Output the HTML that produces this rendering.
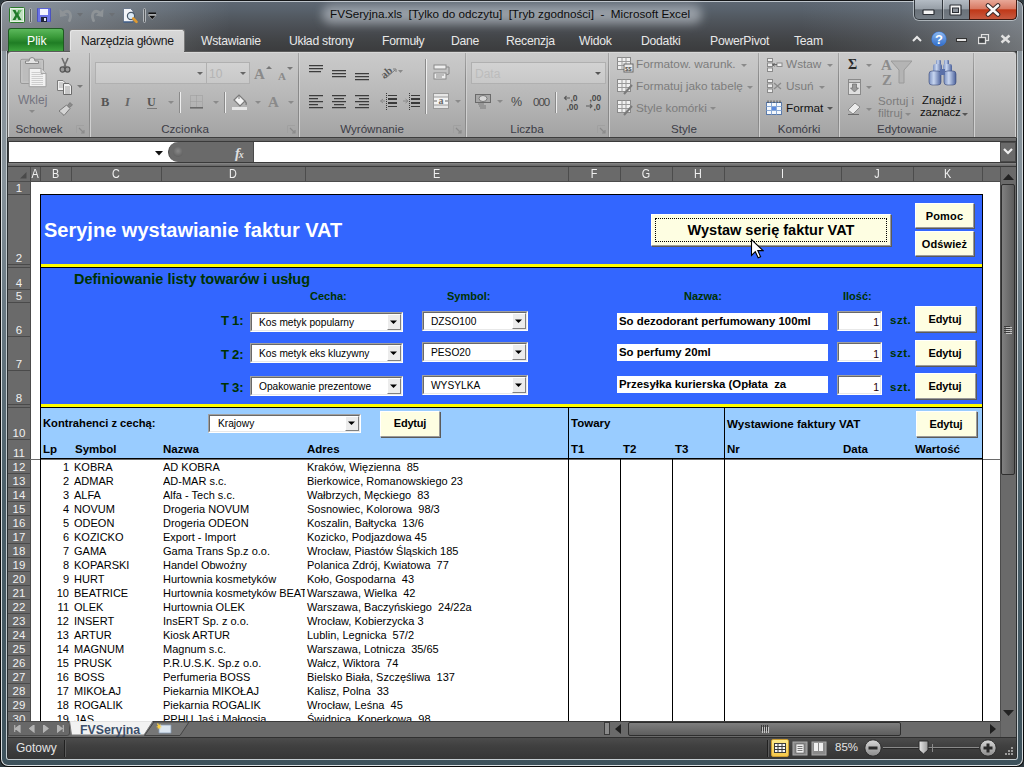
<!DOCTYPE html><html><head><meta charset="utf-8"><style>
html,body{margin:0;padding:0;}
body{width:1024px;height:767px;overflow:hidden;position:relative;background:#2f3a40;font-family:"Liberation Sans",sans-serif;}
.r{position:absolute;box-sizing:border-box;}
.t{position:absolute;white-space:nowrap;}
</style></head><body>

<div class="r" style="left:0px;top:0px;width:1024px;height:52px;background:linear-gradient(#5e6874 0,#58616b 10px,#50565d 20px,#474a4f 32px,#404244 42px,#3b3c3e 51px);border-radius:7px 7px 0 0;overflow:hidden;"></div>
<div class="r" style="left:0px;top:0px;width:1024px;height:52px;background:linear-gradient(90deg,rgba(200,208,215,0.45) 0,rgba(190,198,205,0.3) 100px,rgba(190,198,205,0.15) 170px,rgba(0,0,0,0) 230px,rgba(0,0,0,0) 800px,rgba(160,170,180,0.15) 900px,rgba(200,208,215,0.38) 1024px);border-radius:7px 7px 0 0;"></div>
<div class="r" style="left:0px;top:0px;width:1024px;height:52px;border:1px solid #141618;border-bottom:none;border-radius:7px 7px 0 0;box-shadow:inset 1px 1px 0 rgba(230,235,240,0.7), inset -1px 0 0 rgba(230,235,240,0.6);"></div>
<div class="r" style="left:0px;top:51px;width:1024px;height:716px;background:#0a0a0a;border-radius:0 0 8px 8px;"></div>
<div class="r" style="left:1px;top:51px;width:1022px;height:715px;background:#d8dde0;border-radius:0 0 7px 7px;"></div>
<div class="r" style="left:2px;top:51px;width:1020px;height:714px;background:linear-gradient(#8c969e 0,#86929a 130px,#6a7a84 250px,#4a5e68 450px,#3e525c 716px);border-radius:0 0 6px 6px;"></div>
<div class="r" style="left:6px;top:51px;width:1012px;height:709px;background:#c4ccd0;border-radius:0 0 3px 3px;"></div>
<div class="r" style="left:7px;top:51px;width:1010px;height:708px;background:#2a2e30;border-radius:0 0 2px 2px;"></div>
<svg class="r" style="left:9px;top:7px;" width="17" height="16" viewBox="0 0 17 16"><rect x="0.5" y="0.5" width="15" height="15" rx="1" fill="#e8f4e8" stroke="#2a7a2a"/><rect x="2" y="2" width="12" height="12" fill="#bfe0bf"/><path d="M3.5 3 L6.5 3 L8 6 L9.5 3 L12.5 3 L9.6 8 L12.5 13 L9.5 13 L8 10 L6.5 13 L3.5 13 L6.4 8 Z" fill="#1f7a28"/><path d="M9.5 3 L12.5 3 L9.6 8 Z" fill="#6cc06c"/></svg>
<div class="r" style="left:29px;top:8px;width:3px;height:15px;border:1px solid #b4b8bc;border-radius:2px;background:#5a5e62;"></div>
<svg class="r" style="left:37px;top:8px;" width="14" height="14" viewBox="0 0 14 14"><rect x="0" y="0" width="14" height="14" rx="1" fill="#4a52c0"/><rect x="1" y="0.5" width="12" height="13" fill="#6c74e6"/><rect x="3" y="1" width="8" height="6" fill="#f4f4ff"/><rect x="4" y="9" width="6" height="5" fill="#20243a"/><rect x="7" y="10" width="2" height="3" fill="#e0e0f0"/></svg>
<svg class="r" style="left:59px;top:7px;" width="14" height="15" viewBox="0 0 14 15"><path d="M3.5 6.5 Q7 3 10 5 Q13 8 10.5 13.5" fill="none" stroke="#8e9397" stroke-width="2.8" stroke-linecap="round"/><path d="M0.5 2 L1 10 L8.5 8.5 Z" fill="#8e9397"/></svg>
<svg class="r" style="left:77px;top:13px;" width="7" height="4" viewBox="0 0 7 4"><path d="M0 0 L6 0 L3 3.5 Z" fill="#6c7075"/></svg>
<svg class="r" style="left:90px;top:7px;" width="14" height="15" viewBox="0 0 14 15"><path d="M10.5 6.5 Q7 3 4 5 Q1 8 3.5 13.5" fill="none" stroke="#8e9397" stroke-width="2.8" stroke-linecap="round"/><path d="M13.5 2 L13 10 L5.5 8.5 Z" fill="#8e9397"/></svg>
<svg class="r" style="left:109px;top:13px;" width="7" height="4" viewBox="0 0 7 4"><path d="M0 0 L6 0 L3 3.5 Z" fill="#6c7075"/></svg>
<svg class="r" style="left:122px;top:7px;" width="16" height="17" viewBox="0 0 16 17"><path d="M1.5 1.5 L8.5 1.5 L11 4 L11 15 L1.5 15 Z" fill="#f4f6fa" stroke="#5a6a80" stroke-width="0.8"/><path d="M1.5 15 H11" stroke="#3a5a8a" stroke-width="1.2"/><circle cx="9" cy="9" r="3.6" fill="#dceaf6" stroke="#4a5a6a" stroke-width="1.2"/><path d="M11.3 11.5 L14.5 14.8" stroke="#e09a30" stroke-width="2.6" stroke-linecap="round"/></svg>
<div class="r" style="left:143px;top:8px;width:3px;height:15px;border:1px solid #b4b8bc;border-radius:2px;background:#5a5e62;"></div>
<svg class="r" style="left:148px;top:12px;" width="9" height="9" viewBox="0 0 9 9"><rect x="0.5" y="0.5" width="7.5" height="1.6" fill="#111"/><rect x="0.5" y="2.1" width="7.5" height="0.6" fill="#ddd"/><path d="M0.5 3.5 L8 3.5 L4.25 7.5 Z" fill="#111" stroke="#ddd" stroke-width="0.5"/></svg>
<div class="r" style="left:322px;top:5px;width:380px;height:19px;background:rgba(205,212,218,0.55);border-radius:10px;filter:blur(5px);"></div>
<div class="t" style="left:330px;top:8.10px;font-size:11.7px;line-height:11.7px;color:#0c0c0c;">FVSeryjna.xls&nbsp; [Tylko do odczytu]&nbsp; [Tryb zgodności]&nbsp; -&nbsp; Microsoft Excel</div>
<div class="r" style="left:913px;top:0px;width:105px;height:21px;border-radius:0 0 6px 6px;background:rgba(230,236,240,0.55);"></div>
<div class="r" style="left:914px;top:0px;width:103px;height:20px;border:1px solid #30363c;border-top:none;border-radius:0 0 5px 5px;overflow:hidden;background:linear-gradient(#b4bcc4 0,#98a0a8 45%,#6a727a 52%,#747c84 100%);"></div>
<div class="r" style="left:942px;top:0px;width:1px;height:19px;background:#30363c;box-shadow:1px 0 0 rgba(255,255,255,0.35);"></div>
<div class="r" style="left:969px;top:0px;width:48px;height:20px;border:1px solid #401810;border-top:none;border-radius:0 0 5px 0;background:linear-gradient(#e8a898 0,#d87a64 45%,#c03818 52%,#c85a40 100%);"></div>
<svg class="r" style="left:922px;top:9px;" width="14" height="7" viewBox="0 0 14 7"><rect x="1" y="1" width="11" height="4.5" rx="0.5" fill="#f4f4f4" stroke="#2a2e34" stroke-width="1.2"/></svg>
<svg class="r" style="left:949px;top:4px;" width="13" height="12" viewBox="0 0 13 12"><rect x="1" y="1" width="11" height="10" rx="0.5" fill="#f4f4f4" stroke="#2a2e34" stroke-width="1.2"/><rect x="3.5" y="4" width="6" height="4.5" fill="#8a9098" stroke="#2a2e34" stroke-width="1"/></svg>
<svg class="r" style="left:985px;top:3px;" width="16" height="14" viewBox="0 0 16 14"><path d="M3 2.5 L13 11.5 M13 2.5 L3 11.5" stroke="#3a2a2a" stroke-width="4.6" stroke-linecap="round"/><path d="M3 2.5 L13 11.5 M13 2.5 L3 11.5" stroke="#fafafa" stroke-width="2.6" stroke-linecap="round"/></svg>
<div class="r" style="left:8px;top:28px;width:56px;height:24px;background:linear-gradient(#5cb85c 0,#3a9a3a 35%,#1f7d24 60%,#40a840 100%);border:1px solid #1f5a22;border-bottom:none;border-radius:3px 3px 0 0;"></div>
<div class="t" style="left:27px;top:34.67px;font-size:12.2px;line-height:12.2px;color:#fff;">Plik</div>
<div class="r" style="left:69px;top:29px;width:116px;height:23px;background:linear-gradient(#d8d8d8,#cdcdcd);border:1px solid #7a7a7a;border-bottom:none;border-radius:3px 3px 0 0;box-shadow:inset 1px 1px 0 #e6e6e6;"></div>
<div class="t" style="left:81px;top:34.67px;font-size:12.2px;line-height:12.2px;color:#1a1a1a;letter-spacing:-0.25px;">Narzędzia główne</div>
<div class="t" style="left:201px;top:34.67px;font-size:12.2px;line-height:12.2px;color:#e8e8e8;letter-spacing:-0.25px;">Wstawianie</div>
<div class="t" style="left:289px;top:34.67px;font-size:12.2px;line-height:12.2px;color:#e8e8e8;letter-spacing:-0.25px;">Układ strony</div>
<div class="t" style="left:382px;top:34.67px;font-size:12.2px;line-height:12.2px;color:#e8e8e8;letter-spacing:-0.25px;">Formuły</div>
<div class="t" style="left:451px;top:34.67px;font-size:12.2px;line-height:12.2px;color:#e8e8e8;letter-spacing:-0.25px;">Dane</div>
<div class="t" style="left:506px;top:34.67px;font-size:12.2px;line-height:12.2px;color:#e8e8e8;letter-spacing:-0.25px;">Recenzja</div>
<div class="t" style="left:579px;top:34.67px;font-size:12.2px;line-height:12.2px;color:#e8e8e8;letter-spacing:-0.25px;">Widok</div>
<div class="t" style="left:641px;top:34.67px;font-size:12.2px;line-height:12.2px;color:#e8e8e8;letter-spacing:-0.25px;">Dodatki</div>
<div class="t" style="left:710px;top:34.67px;font-size:12.2px;line-height:12.2px;color:#e8e8e8;letter-spacing:-0.25px;">PowerPivot</div>
<div class="t" style="left:794px;top:34.67px;font-size:12.2px;line-height:12.2px;color:#e8e8e8;letter-spacing:-0.25px;">Team</div>
<svg class="r" style="left:912px;top:35px;" width="10" height="7" viewBox="0 0 10 7"><path d="M1 6 L5 2 L9 6" fill="none" stroke="#e8e8e8" stroke-width="2"/></svg>
<svg class="r" style="left:931px;top:31px;" width="16" height="16" viewBox="0 0 16 16"><circle cx="8" cy="8" r="7.6" fill="#3b78d8"/><circle cx="8" cy="8" r="7" fill="url(#hg)"/><defs><linearGradient id="hg" x1="0" y1="0" x2="0" y2="1"><stop offset="0" stop-color="#8cb8f0"/><stop offset="1" stop-color="#2f6cc8"/></linearGradient></defs><text x="8" y="12.5" font-family="Liberation Sans" font-weight="bold" font-size="13" fill="#fff" text-anchor="middle">?</text></svg>
<div class="r" style="left:956px;top:38px;width:11px;height:4px;background:#e4e4e4;border:1px solid #333;"></div>
<svg class="r" style="left:978px;top:34px;" width="12" height="11" viewBox="0 0 12 11"><rect x="3.5" y="0.5" width="7" height="6" fill="none" stroke="#e0e0e0" stroke-width="1.2"/><rect x="0.5" y="3.5" width="7" height="6" fill="#45484b" stroke="#e0e0e0" stroke-width="1.3"/></svg>
<svg class="r" style="left:1000px;top:34px;" width="11" height="10" viewBox="0 0 11 10"><path d="M1.5 1.5 L9.5 8.5 M9.5 1.5 L1.5 8.5" stroke="#e0e0e0" stroke-width="2.4"/></svg>
<div class="r" style="left:7px;top:51px;width:1010px;height:87px;background:linear-gradient(#cbcbcb 0,#c4c4c4 20%,#bababa 45%,#afafaf 72%,#a3a3a3 100%);border:1px solid #5a5a5a;border-bottom:none;border-radius:4px 4px 0 0;box-shadow:inset 1px 1px 0 #d8d8d8,inset -1px 0 0 #d0d0d0;"></div>
<div class="r" style="left:89px;top:53px;width:1px;height:84px;background:linear-gradient(#a8a8a8,#8a8a8a 30%,#888 80%,#929292);box-shadow:1px 0 0 #d0d0d0;"></div>
<div class="r" style="left:298px;top:53px;width:1px;height:84px;background:linear-gradient(#a8a8a8,#8a8a8a 30%,#888 80%,#929292);box-shadow:1px 0 0 #d0d0d0;"></div>
<div class="r" style="left:465px;top:53px;width:1px;height:84px;background:linear-gradient(#a8a8a8,#8a8a8a 30%,#888 80%,#929292);box-shadow:1px 0 0 #d0d0d0;"></div>
<div class="r" style="left:608px;top:53px;width:1px;height:84px;background:linear-gradient(#a8a8a8,#8a8a8a 30%,#888 80%,#929292);box-shadow:1px 0 0 #d0d0d0;"></div>
<div class="r" style="left:758px;top:53px;width:1px;height:84px;background:linear-gradient(#a8a8a8,#8a8a8a 30%,#888 80%,#929292);box-shadow:1px 0 0 #d0d0d0;"></div>
<div class="r" style="left:838px;top:53px;width:1px;height:84px;background:linear-gradient(#a8a8a8,#8a8a8a 30%,#888 80%,#929292);box-shadow:1px 0 0 #d0d0d0;"></div>
<div class="r" style="left:973px;top:53px;width:1px;height:84px;background:linear-gradient(#a8a8a8,#8a8a8a 30%,#888 80%,#929292);box-shadow:1px 0 0 #d0d0d0;"></div>
<div class="r" style="left:70px;top:50px;width:114px;height:3px;background:#cccccc;"></div>
<div class="r" style="left:8px;top:137px;width:1008px;height:5px;background:linear-gradient(#3e3e3e 0,#3e3e3e 1px,#727272 1px,#666 4px,#3a3a3a 4px);"></div>
<div class="r" style="left:8px;top:142px;width:1008px;height:20px;background:#fff;border-left:1px solid #3a3a3a;"></div>
<svg class="r" style="left:155px;top:151px;" width="9" height="5" viewBox="0 0 9 5"><path d="M0 0 L8 0 L4 4.5 Z" fill="#111"/></svg>
<div class="r" style="left:168px;top:142px;width:85px;height:20px;background:#6a6a6a;border-radius:10px 0 0 10px;border-left:1px solid #4a4a4a;"></div>
<div class="r" style="left:173px;top:147px;width:10px;height:10px;border-radius:50%;background:radial-gradient(circle at 50% 40%,#888,#555);"></div>
<div class="t" style="left:235px;top:145.73px;font-size:14.5px;line-height:14.5px;color:#e0e0e0;font-family:'Liberation Serif',serif;font-weight:bold;letter-spacing:-1px;"><i>f</i><i style="font-size:10px;">x</i></div>
<div class="r" style="left:253px;top:142px;width:1px;height:20px;background:#4a4a4a;"></div>
<div class="r" style="left:1000px;top:142px;width:16px;height:20px;background:#6a6a6a;border:1px solid #4a4a4a;"></div>
<svg class="r" style="left:1003px;top:148px;" width="10" height="7" viewBox="0 0 10 7"><path d="M1 1 L5 5 L9 1" fill="none" stroke="#f0f0f0" stroke-width="2.2"/></svg>
<div class="r" style="left:8px;top:162px;width:1008px;height:5px;background:linear-gradient(#3a3a3a 0,#3a3a3a 1px,#8a8a8a 1px,#7a7a7a 2px,#666 4px,#3a3a3a 4px);"></div>
<div class="r" style="left:8px;top:167px;width:992px;height:15px;background:#6a6a6a;border-bottom:1px solid #4c4c4c;"></div>
<div class="r" style="left:30px;top:167px;width:1px;height:15px;background:#4c4c4c;"></div>
<div class="t" style="left:30px;top:167.84px;font-size:12px;line-height:12px;color:#f0f0f0;width:10px;text-align:center;transform:scaleX(0.9);">A</div>
<div class="r" style="left:40px;top:167px;width:1px;height:15px;background:#4c4c4c;"></div>
<div class="t" style="left:40px;top:167.84px;font-size:12px;line-height:12px;color:#f0f0f0;width:31px;text-align:center;transform:scaleX(0.9);">B</div>
<div class="r" style="left:71px;top:167px;width:1px;height:15px;background:#4c4c4c;"></div>
<div class="t" style="left:71px;top:167.84px;font-size:12px;line-height:12px;color:#f0f0f0;width:90px;text-align:center;transform:scaleX(0.9);">C</div>
<div class="r" style="left:161px;top:167px;width:1px;height:15px;background:#4c4c4c;"></div>
<div class="t" style="left:161px;top:167.84px;font-size:12px;line-height:12px;color:#f0f0f0;width:144px;text-align:center;transform:scaleX(0.9);">D</div>
<div class="r" style="left:305px;top:167px;width:1px;height:15px;background:#4c4c4c;"></div>
<div class="t" style="left:305px;top:167.84px;font-size:12px;line-height:12px;color:#f0f0f0;width:263px;text-align:center;transform:scaleX(0.9);">E</div>
<div class="r" style="left:568px;top:167px;width:1px;height:15px;background:#4c4c4c;"></div>
<div class="t" style="left:568px;top:167.84px;font-size:12px;line-height:12px;color:#f0f0f0;width:52px;text-align:center;transform:scaleX(0.9);">F</div>
<div class="r" style="left:620px;top:167px;width:1px;height:15px;background:#4c4c4c;"></div>
<div class="t" style="left:620px;top:167.84px;font-size:12px;line-height:12px;color:#f0f0f0;width:52px;text-align:center;transform:scaleX(0.9);">G</div>
<div class="r" style="left:672px;top:167px;width:1px;height:15px;background:#4c4c4c;"></div>
<div class="t" style="left:672px;top:167.84px;font-size:12px;line-height:12px;color:#f0f0f0;width:52px;text-align:center;transform:scaleX(0.9);">H</div>
<div class="r" style="left:724px;top:167px;width:1px;height:15px;background:#4c4c4c;"></div>
<div class="t" style="left:724px;top:167.84px;font-size:12px;line-height:12px;color:#f0f0f0;width:117px;text-align:center;transform:scaleX(0.9);">I</div>
<div class="r" style="left:841px;top:167px;width:1px;height:15px;background:#4c4c4c;"></div>
<div class="t" style="left:841px;top:167.84px;font-size:12px;line-height:12px;color:#f0f0f0;width:72px;text-align:center;transform:scaleX(0.9);">J</div>
<div class="r" style="left:913px;top:167px;width:1px;height:15px;background:#4c4c4c;"></div>
<div class="t" style="left:913px;top:167.84px;font-size:12px;line-height:12px;color:#f0f0f0;width:69px;text-align:center;transform:scaleX(0.9);">K</div>
<div class="r" style="left:982px;top:167px;width:1px;height:15px;background:#4c4c4c;"></div>
<div class="t" style="left:982px;top:167.84px;font-size:12px;line-height:12px;color:#f0f0f0;width:18px;text-align:center;transform:scaleX(0.9);"></div>
<svg class="r" style="left:20px;top:172px;" width="7" height="7" viewBox="0 0 7 7"><path d="M6.5 0 L6.5 6.5 L0 6.5 Z" fill="#4a4a4a"/></svg>
<div class="r" style="left:8px;top:182px;width:23px;height:539px;background:#6a6a6a;border-right:1px solid #4c4c4c;"></div>
<div class="r" style="left:8px;top:194px;width:22px;height:1px;background:#4a4a4a;"></div>
<div class="t" style="left:8px;top:183.27px;font-size:11.5px;line-height:11.5px;color:#f0f0f0;width:22px;text-align:center;">1</div>
<div class="r" style="left:8px;top:264px;width:22px;height:1px;background:#4a4a4a;"></div>
<div class="t" style="left:8px;top:253.27px;font-size:11.5px;line-height:11.5px;color:#f0f0f0;width:22px;text-align:center;">2</div>
<div class="r" style="left:8px;top:267px;width:22px;height:1px;background:#4a4a4a;"></div>
<div class="r" style="left:8px;top:289px;width:22px;height:1px;background:#4a4a4a;"></div>
<div class="t" style="left:8px;top:278.27px;font-size:11.5px;line-height:11.5px;color:#f0f0f0;width:22px;text-align:center;">4</div>
<div class="r" style="left:8px;top:302px;width:22px;height:1px;background:#4a4a4a;"></div>
<div class="t" style="left:8px;top:291.27px;font-size:11.5px;line-height:11.5px;color:#f0f0f0;width:22px;text-align:center;">5</div>
<div class="r" style="left:8px;top:336px;width:22px;height:1px;background:#4a4a4a;"></div>
<div class="t" style="left:8px;top:325.27px;font-size:11.5px;line-height:11.5px;color:#f0f0f0;width:22px;text-align:center;">6</div>
<div class="r" style="left:8px;top:370px;width:22px;height:1px;background:#4a4a4a;"></div>
<div class="t" style="left:8px;top:359.27px;font-size:11.5px;line-height:11.5px;color:#f0f0f0;width:22px;text-align:center;">7</div>
<div class="r" style="left:8px;top:404px;width:22px;height:1px;background:#4a4a4a;"></div>
<div class="t" style="left:8px;top:393.27px;font-size:11.5px;line-height:11.5px;color:#f0f0f0;width:22px;text-align:center;">8</div>
<div class="r" style="left:8px;top:407px;width:22px;height:1px;background:#4a4a4a;"></div>
<div class="r" style="left:8px;top:439px;width:22px;height:1px;background:#4a4a4a;"></div>
<div class="t" style="left:8px;top:428.27px;font-size:11.5px;line-height:11.5px;color:#f0f0f0;width:22px;text-align:center;">10</div>
<div class="r" style="left:8px;top:459px;width:22px;height:1px;background:#4a4a4a;"></div>
<div class="t" style="left:8px;top:448.27px;font-size:11.5px;line-height:11.5px;color:#f0f0f0;width:22px;text-align:center;">11</div>
<div class="r" style="left:8px;top:473px;width:22px;height:1px;background:#4a4a4a;"></div>
<div class="t" style="left:8px;top:462.27px;font-size:11.5px;line-height:11.5px;color:#f0f0f0;width:22px;text-align:center;">12</div>
<div class="r" style="left:8px;top:487px;width:22px;height:1px;background:#4a4a4a;"></div>
<div class="t" style="left:8px;top:476.27px;font-size:11.5px;line-height:11.5px;color:#f0f0f0;width:22px;text-align:center;">13</div>
<div class="r" style="left:8px;top:501px;width:22px;height:1px;background:#4a4a4a;"></div>
<div class="t" style="left:8px;top:490.27px;font-size:11.5px;line-height:11.5px;color:#f0f0f0;width:22px;text-align:center;">14</div>
<div class="r" style="left:8px;top:515px;width:22px;height:1px;background:#4a4a4a;"></div>
<div class="t" style="left:8px;top:504.27px;font-size:11.5px;line-height:11.5px;color:#f0f0f0;width:22px;text-align:center;">15</div>
<div class="r" style="left:8px;top:529px;width:22px;height:1px;background:#4a4a4a;"></div>
<div class="t" style="left:8px;top:518.27px;font-size:11.5px;line-height:11.5px;color:#f0f0f0;width:22px;text-align:center;">16</div>
<div class="r" style="left:8px;top:543px;width:22px;height:1px;background:#4a4a4a;"></div>
<div class="t" style="left:8px;top:532.27px;font-size:11.5px;line-height:11.5px;color:#f0f0f0;width:22px;text-align:center;">17</div>
<div class="r" style="left:8px;top:557px;width:22px;height:1px;background:#4a4a4a;"></div>
<div class="t" style="left:8px;top:546.27px;font-size:11.5px;line-height:11.5px;color:#f0f0f0;width:22px;text-align:center;">18</div>
<div class="r" style="left:8px;top:571px;width:22px;height:1px;background:#4a4a4a;"></div>
<div class="t" style="left:8px;top:560.27px;font-size:11.5px;line-height:11.5px;color:#f0f0f0;width:22px;text-align:center;">19</div>
<div class="r" style="left:8px;top:585px;width:22px;height:1px;background:#4a4a4a;"></div>
<div class="t" style="left:8px;top:574.27px;font-size:11.5px;line-height:11.5px;color:#f0f0f0;width:22px;text-align:center;">20</div>
<div class="r" style="left:8px;top:599px;width:22px;height:1px;background:#4a4a4a;"></div>
<div class="t" style="left:8px;top:588.27px;font-size:11.5px;line-height:11.5px;color:#f0f0f0;width:22px;text-align:center;">21</div>
<div class="r" style="left:8px;top:613px;width:22px;height:1px;background:#4a4a4a;"></div>
<div class="t" style="left:8px;top:602.27px;font-size:11.5px;line-height:11.5px;color:#f0f0f0;width:22px;text-align:center;">22</div>
<div class="r" style="left:8px;top:627px;width:22px;height:1px;background:#4a4a4a;"></div>
<div class="t" style="left:8px;top:616.27px;font-size:11.5px;line-height:11.5px;color:#f0f0f0;width:22px;text-align:center;">23</div>
<div class="r" style="left:8px;top:641px;width:22px;height:1px;background:#4a4a4a;"></div>
<div class="t" style="left:8px;top:630.27px;font-size:11.5px;line-height:11.5px;color:#f0f0f0;width:22px;text-align:center;">24</div>
<div class="r" style="left:8px;top:655px;width:22px;height:1px;background:#4a4a4a;"></div>
<div class="t" style="left:8px;top:644.27px;font-size:11.5px;line-height:11.5px;color:#f0f0f0;width:22px;text-align:center;">25</div>
<div class="r" style="left:8px;top:669px;width:22px;height:1px;background:#4a4a4a;"></div>
<div class="t" style="left:8px;top:658.27px;font-size:11.5px;line-height:11.5px;color:#f0f0f0;width:22px;text-align:center;">26</div>
<div class="r" style="left:8px;top:683px;width:22px;height:1px;background:#4a4a4a;"></div>
<div class="t" style="left:8px;top:672.27px;font-size:11.5px;line-height:11.5px;color:#f0f0f0;width:22px;text-align:center;">27</div>
<div class="r" style="left:8px;top:697px;width:22px;height:1px;background:#4a4a4a;"></div>
<div class="t" style="left:8px;top:686.27px;font-size:11.5px;line-height:11.5px;color:#f0f0f0;width:22px;text-align:center;">28</div>
<div class="r" style="left:8px;top:711px;width:22px;height:1px;background:#4a4a4a;"></div>
<div class="t" style="left:8px;top:700.27px;font-size:11.5px;line-height:11.5px;color:#f0f0f0;width:22px;text-align:center;">29</div>
<div class="r" style="left:8px;top:725px;width:22px;height:1px;background:#4a4a4a;"></div>
<div class="t" style="left:8px;top:714.27px;font-size:11.5px;line-height:11.5px;color:#f0f0f0;width:22px;text-align:center;">30</div>
<div class="r" style="left:31px;top:182px;width:969px;height:539px;background:#fff;"></div>
<div class="r" style="left:30px;top:459px;width:970px;height:1px;background:#6a6a6a;"></div>
<div class="r" style="left:1000px;top:167px;width:16px;height:554px;background:#6a6a6a;border-left:1px solid #4c4c4c;"></div>
<svg class="r" style="left:1003px;top:174px;" width="11" height="6" viewBox="0 0 11 6"><path d="M0 6 L5.5 0 L11 6 Z" fill="#222"/></svg>
<div class="r" style="left:1001px;top:184px;width:14px;height:291px;background:linear-gradient(90deg,#808080,#5c5c5c);border:1px solid #2e2e2e;border-radius:2px;"></div>
<svg class="r" style="left:1003px;top:325px;" width="10" height="10" viewBox="0 0 10 10"><path d="M1 1.5 H7 M1 3.5 H7 M1 5.5 H7 M1 7.5 H7" stroke="#3a3a3a" stroke-width="1"/><path d="M3 2.5 H9 M3 4.5 H9 M3 6.5 H9 M3 8.5 H9" stroke="#c4c4c4" stroke-width="1"/></svg>
<svg class="r" style="left:1003px;top:710px;" width="11" height="6" viewBox="0 0 11 6"><path d="M0 0 L5.5 6 L11 0 Z" fill="#222"/></svg>
<div class="r" style="left:8px;top:721px;width:1008px;height:16px;background:#6a6a6a;border-top:1px solid #3a3a3a;"></div>
<div class="r" style="left:8px;top:721px;width:62px;height:15px;border:1px solid #4a4a4a;border-radius:0 3px 3px 0;background:#686868;"></div>
<svg class="r" style="left:14px;top:725px;" width="8" height="8" viewBox="0 0 8 8"><path d="M0.7 0 V7 M6 0 L1.5 3.5 L6 7 Z" fill="#b4b4b4" stroke="#b4b4b4" stroke-width="1.2"/></svg>
<svg class="r" style="left:29px;top:725px;" width="8" height="8" viewBox="0 0 8 8"><path d="M5 0 L0.5 3.5 L5 7 Z" fill="#b4b4b4" stroke="#b4b4b4" stroke-width="1.2"/></svg>
<svg class="r" style="left:43px;top:725px;" width="8" height="8" viewBox="0 0 8 8"><path d="M0.5 0 L5 3.5 L0.5 7 Z" fill="#b4b4b4" stroke="#b4b4b4" stroke-width="1.2"/></svg>
<svg class="r" style="left:57px;top:725px;" width="8" height="8" viewBox="0 0 8 8"><path d="M0.5 0 L5 3.5 L0.5 7 Z M6.3 0 V7" fill="#b4b4b4" stroke="#b4b4b4" stroke-width="1.2"/></svg>
<svg class="r" style="left:69px;top:721px;" width="84" height="16" viewBox="0 0 84 16"><path d="M0.5 0 L2.5 14 L75 14 L84 0 Z" fill="#f2f2f2" stroke="#7a7a7a" stroke-width="1"/><path d="M1 0 H83" stroke="#f2f2f2" stroke-width="1.5"/></svg>
<div class="t" style="left:80px;top:723.59px;font-size:12.3px;line-height:12.3px;color:#3c4e6a;font-weight:bold;">FVSeryjna</div>
<svg class="r" style="left:144px;top:721px;" width="46" height="16" viewBox="0 0 46 16"><path d="M0.5 14.5 L10 1 L45 1 L36 14.5 Z" fill="#767676" stroke="#444" stroke-width="1"/><path d="M15 4 H27 V12 H15 Z" fill="#dce6f0" stroke="#8aa0b8" stroke-width="0.8"/><path d="M14 2 L15 4 L17 3 L16 5 L18 6 L16 6.5 L16.5 8.5 L15 7 L13.5 8.5 L14 6.5 L12 6 L14 5 L13 3 Z" fill="#ffd040"/></svg>
<div class="r" style="left:604px;top:722px;width:6px;height:13px;background:#8a8a8a;border:1px solid #3a3a3a;"></div>
<svg class="r" style="left:614px;top:724px;" width="8" height="10" viewBox="0 0 8 10"><path d="M7 0 L1 5 L7 10 Z" fill="#1e1e1e"/></svg>
<div class="r" style="left:628px;top:722px;width:273px;height:14px;background:linear-gradient(#7e7e7e,#5e5e5e);border:1px solid #2e2e2e;border-radius:2px;"></div>
<svg class="r" style="left:760px;top:724px;" width="10" height="10" viewBox="0 0 10 10"><path d="M1.5 1 V7 M3.5 1 V7 M5.5 1 V7 M7.5 1 V7" stroke="#3a3a3a" stroke-width="1"/><path d="M2.5 3 V9 M4.5 3 V9 M6.5 3 V9 M8.5 3 V9" stroke="#c4c4c4" stroke-width="1"/></svg>
<svg class="r" style="left:989px;top:724px;" width="8" height="10" viewBox="0 0 8 10"><path d="M1 0 L7 5 L1 10 Z" fill="#1e1e1e"/></svg>
<div class="r" style="left:1000px;top:721px;width:16px;height:16px;background:#6a6a6a;border-left:1px solid #5a5a5a;"></div>
<div class="r" style="left:8px;top:737px;width:1008px;height:22px;background:linear-gradient(#303030 0,#303030 1px,#4c4c4c 1px,#404040 40%,#353535 100%);"></div>
<div class="t" style="left:16px;top:741.84px;font-size:12px;line-height:12px;color:#e4e4e4;">Gotowy</div>
<div class="r" style="left:64px;top:740px;width:1px;height:17px;background:#202020;box-shadow:1px 0 0 #5a5a5a;"></div>
<div class="r" style="left:767px;top:740px;width:1px;height:17px;background:#202020;box-shadow:1px 0 0 #5a5a5a;"></div>
<div class="r" style="left:771px;top:739px;width:18px;height:18px;background:linear-gradient(#fde98a,#f6c84a);border:1px solid #c89a30;border-radius:2px;"></div>
<svg class="r" style="left:774px;top:743px;" width="12" height="10" viewBox="0 0 12 10"><rect x="0.5" y="0.5" width="11" height="9" fill="#f8f8f8" stroke="#3a3a3a"/><path d="M0 3.5 H12 M0 6.5 H12 M4 0 V10 M8 0 V10" stroke="#3a3a3a" stroke-width="1"/></svg>
<svg class="r" style="left:792px;top:741px;" width="16" height="15" viewBox="0 0 16 15"><rect x="1" y="1" width="14" height="13" fill="#8a8a8a" stroke="#aaa"/><rect x="4" y="3" width="8" height="9" fill="#f0f0f0" stroke="#555" stroke-width="0.6"/><path d="M5.5 5.5 H10.5 M5.5 7.5 H10.5 M5.5 9.5 H10.5" stroke="#555" stroke-width="0.8"/></svg>
<svg class="r" style="left:811px;top:741px;" width="16" height="15" viewBox="0 0 16 15"><rect x="1" y="1" width="14" height="13" fill="#8a8a8a" stroke="#aaa"/><rect x="3" y="2" width="4" height="8" fill="#f0f0f0"/><rect x="8" y="2" width="4" height="8" fill="#f0f0f0"/></svg>
<div class="t" style="left:835px;top:742.27px;font-size:11.5px;line-height:11.5px;color:#e4e4e4;">85%</div>
<svg class="r" style="left:864px;top:739px;" width="18" height="18" viewBox="0 0 18 18"><circle cx="9" cy="9" r="8.2" fill="url(#zg)" stroke="#2a2a2a"/><defs><linearGradient id="zg" x1="0" y1="0" x2="0" y2="1"><stop offset="0" stop-color="#d8d8d8"/><stop offset="1" stop-color="#8a8a8a"/></linearGradient></defs><rect x="4.5" y="7.5" width="9" height="3" fill="#2a2a2a"/></svg>
<div class="r" style="left:883px;top:747px;width:96px;height:1px;background:#8a8a8a;box-shadow:0 1px 0 #2a2a2a;"></div>
<svg class="r" style="left:918px;top:740px;" width="11" height="15" viewBox="0 0 11 15"><path d="M1 1 H10 V10 L5.5 14 L1 10 Z" fill="url(#tg)" stroke="#2a2a2a"/><defs><linearGradient id="tg" x1="0" y1="0" x2="1" y2="0"><stop offset="0" stop-color="#e8e8e8"/><stop offset="1" stop-color="#9a9a9a"/></linearGradient></defs></svg>
<div class="r" style="left:932px;top:744px;width:1px;height:8px;background:#8a8a8a;"></div>
<svg class="r" style="left:979px;top:739px;" width="18" height="18" viewBox="0 0 18 18"><circle cx="9" cy="9" r="8.2" fill="url(#zg)" stroke="#2a2a2a"/><rect x="4.5" y="7.5" width="9" height="3" fill="#2a2a2a"/><rect x="7.5" y="4.5" width="3" height="9" fill="#2a2a2a"/></svg>
<svg class="r" style="left:1002px;top:746px;" width="12" height="12" viewBox="0 0 12 12"><g fill="#9a9a9a"><rect x="9" y="1" width="2" height="2"/><rect x="6" y="4" width="2" height="2"/><rect x="9" y="4" width="2" height="2"/><rect x="3" y="7" width="2" height="2"/><rect x="6" y="7" width="2" height="2"/><rect x="9" y="7" width="2" height="2"/></g></svg>
<div class="r" style="left:40px;top:194px;width:943px;height:214px;background:#3366ff;border:1px solid #000;"></div>
<div class="r" style="left:40px;top:264px;width:943px;height:4px;background:#ffff00;border-bottom:1px solid #000;border-left:1px solid #000;border-right:1px solid #000;"></div>
<div class="r" style="left:40px;top:404px;width:943px;height:4px;background:#ffff00;border-bottom:1px solid #000;border-left:1px solid #000;border-right:1px solid #000;"></div>
<div class="r" style="left:40px;top:408px;width:943px;height:51px;background:#99ccff;border:1px solid #000;border-top:none;border-bottom:1px solid #000;"></div>
<div class="r" style="left:40px;top:458px;width:1px;height:263px;background:#000;"></div>
<div class="r" style="left:568px;top:458px;width:1px;height:263px;background:#000;"></div>
<div class="r" style="left:620px;top:458px;width:1px;height:263px;background:#000;"></div>
<div class="r" style="left:672px;top:458px;width:1px;height:263px;background:#000;"></div>
<div class="r" style="left:724px;top:458px;width:1px;height:263px;background:#000;"></div>
<div class="r" style="left:982px;top:458px;width:1px;height:263px;background:#000;"></div>
<div class="r" style="left:568px;top:407px;width:1px;height:52px;background:#000;"></div>
<div class="r" style="left:724px;top:407px;width:1px;height:52px;background:#000;"></div>
<div class="t" style="left:44px;top:220.07px;font-size:20px;line-height:20px;color:#fff;font-weight:bold;">Seryjne wystawianie faktur VAT</div>
<div class="r" style="left:651px;top:214px;width:240px;height:32px;background:#fefee2;border:1px solid;border-color:#fff #9a9a9a #9a9a9a #fff;box-shadow:1px 1px 0 #5a5a5a;"></div>
<div class="r" style="left:655px;top:218px;width:232px;height:24px;border:1px dotted #000;"></div>
<div class="t" style="left:651px;top:223.03px;font-size:14.5px;line-height:14.5px;color:#000;font-weight:bold;width:240px;text-align:center;">Wystaw serię faktur VAT</div>
<div class="r" style="left:915px;top:203px;width:59px;height:25px;background:#fefee2;border:1px solid;border-color:#fff #9a9a9a #9a9a9a #fff;box-shadow:1px 1px 0 #5a5a5a;"></div>
<div class="t" style="left:915px;top:211.19px;font-size:11px;line-height:11px;color:#000;font-weight:bold;width:59px;text-align:center;letter-spacing:0.2px;">Pomoc</div>
<div class="r" style="left:915px;top:231px;width:59px;height:25px;background:#fefee2;border:1px solid;border-color:#fff #9a9a9a #9a9a9a #fff;box-shadow:1px 1px 0 #5a5a5a;"></div>
<div class="t" style="left:915px;top:238.69px;font-size:11px;line-height:11px;color:#000;font-weight:bold;width:59px;text-align:center;letter-spacing:0.1px;">Odśwież</div>
<svg class="r" style="left:750px;top:238px;" width="14" height="22" viewBox="0 0 14 22"><path d="M1.5 1.5 L1.5 17.5 L5.3 13.7 L8.2 19.8 L10.6 18.8 L7.8 12.6 L13 12.6 Z" fill="#fff" stroke="#000" stroke-width="1.1" stroke-linejoin="miter"/></svg>
<div class="t" style="left:74px;top:272.23px;font-size:14.5px;line-height:14.5px;color:#003300;font-weight:bold;">Definiowanie listy towarów i usług</div>
<div class="t" style="left:310px;top:290.69px;font-size:11px;line-height:11px;color:#003300;font-weight:bold;">Cecha:</div>
<div class="t" style="left:447px;top:290.69px;font-size:11px;line-height:11px;color:#003300;font-weight:bold;">Symbol:</div>
<div class="t" style="left:684px;top:290.69px;font-size:11px;line-height:11px;color:#003300;font-weight:bold;">Nazwa:</div>
<div class="t" style="left:843px;top:290.69px;font-size:11px;line-height:11px;color:#003300;font-weight:bold;">Ilość:</div>
<div class="t" style="left:221px;top:313.83px;font-size:13.2px;line-height:13.2px;color:#003300;font-weight:bold;letter-spacing:-0.3px;">T 1:</div>
<div class="r" style="left:250px;top:312px;width:153px;height:20px;background:#fff;border:1px solid;border-color:#a0a0a0 #fff #fff #a0a0a0;"></div>
<div class="r" style="left:251px;top:313px;width:151px;height:18px;border:1px solid;border-color:#696969 #e8e8e8 #e8e8e8 #696969;"></div>
<div class="r" style="left:387px;top:314px;width:14px;height:16px;background:#ececec;border:1px solid;border-color:#fff #808080 #808080 #fff;"></div>
<svg class="r" style="left:390px;top:320px;" width="8" height="5" viewBox="0 0 8 5"><path d="M0 0.5 L7 0.5 L3.5 4 Z" fill="#000"/></svg>
<div class="t" style="left:259px;top:317.87px;font-size:10.2px;line-height:10.2px;color:#000;letter-spacing:0px;">Kos metyk popularny</div>
<div class="r" style="left:422px;top:311px;width:106px;height:20px;background:#fff;border:1px solid;border-color:#a0a0a0 #fff #fff #a0a0a0;"></div>
<div class="r" style="left:423px;top:312px;width:104px;height:18px;border:1px solid;border-color:#696969 #e8e8e8 #e8e8e8 #696969;"></div>
<div class="r" style="left:512px;top:313px;width:14px;height:16px;background:#ececec;border:1px solid;border-color:#fff #808080 #808080 #fff;"></div>
<svg class="r" style="left:515px;top:319px;" width="8" height="5" viewBox="0 0 8 5"><path d="M0 0.5 L7 0.5 L3.5 4 Z" fill="#000"/></svg>
<div class="t" style="left:431px;top:316.87px;font-size:10.2px;line-height:10.2px;color:#000;letter-spacing:0px;">DZSO100</div>
<div class="r" style="left:617px;top:313px;width:211px;height:17px;background:#fff;"></div>
<div class="t" style="left:619px;top:316.35px;font-size:11.4px;line-height:11.4px;color:#000;font-weight:bold;">So dezodorant perfumowany 100ml</div>
<div class="r" style="left:837px;top:311px;width:45px;height:20px;background:#fff;border:1px solid;border-color:#a0a0a0 #fff #fff #a0a0a0;"></div>
<div class="r" style="left:838px;top:312px;width:43px;height:18px;border:1px solid;border-color:#696969 #e8e8e8 #e8e8e8 #696969;"></div>
<div class="t" style="left:837px;top:317.11px;font-size:10.5px;line-height:10.5px;color:#200;width:42px;text-align:right;">1</div>
<div class="t" style="left:890px;top:314.67px;font-size:11.5px;line-height:11.5px;color:#003300;font-weight:bold;letter-spacing:0.5px;">szt.</div>
<div class="r" style="left:915px;top:306px;width:61px;height:26px;background:#fefee2;border:1px solid;border-color:#fff #9a9a9a #9a9a9a #fff;box-shadow:1px 1px 0 #5a5a5a;"></div>
<div class="t" style="left:915px;top:314.29px;font-size:11px;line-height:11px;color:#000;font-weight:bold;width:61px;text-align:center;letter-spacing:-0.1px;text-indent:-1px;">Edytuj</div>
<div class="t" style="left:221px;top:347.83px;font-size:13.2px;line-height:13.2px;color:#003300;font-weight:bold;letter-spacing:-0.3px;">T 2:</div>
<div class="r" style="left:250px;top:343px;width:153px;height:20px;background:#fff;border:1px solid;border-color:#a0a0a0 #fff #fff #a0a0a0;"></div>
<div class="r" style="left:251px;top:344px;width:151px;height:18px;border:1px solid;border-color:#696969 #e8e8e8 #e8e8e8 #696969;"></div>
<div class="r" style="left:387px;top:345px;width:14px;height:16px;background:#ececec;border:1px solid;border-color:#fff #808080 #808080 #fff;"></div>
<svg class="r" style="left:390px;top:351px;" width="8" height="5" viewBox="0 0 8 5"><path d="M0 0.5 L7 0.5 L3.5 4 Z" fill="#000"/></svg>
<div class="t" style="left:259px;top:348.87px;font-size:10.2px;line-height:10.2px;color:#000;letter-spacing:0px;">Kos metyk eks kluzywny</div>
<div class="r" style="left:422px;top:342px;width:106px;height:20px;background:#fff;border:1px solid;border-color:#a0a0a0 #fff #fff #a0a0a0;"></div>
<div class="r" style="left:423px;top:343px;width:104px;height:18px;border:1px solid;border-color:#696969 #e8e8e8 #e8e8e8 #696969;"></div>
<div class="r" style="left:512px;top:344px;width:14px;height:16px;background:#ececec;border:1px solid;border-color:#fff #808080 #808080 #fff;"></div>
<svg class="r" style="left:515px;top:350px;" width="8" height="5" viewBox="0 0 8 5"><path d="M0 0.5 L7 0.5 L3.5 4 Z" fill="#000"/></svg>
<div class="t" style="left:431px;top:347.87px;font-size:10.2px;line-height:10.2px;color:#000;letter-spacing:0px;">PESO20</div>
<div class="r" style="left:617px;top:344px;width:211px;height:17px;background:#fff;"></div>
<div class="t" style="left:619px;top:347.35px;font-size:11.4px;line-height:11.4px;color:#000;font-weight:bold;">So perfumy 20ml</div>
<div class="r" style="left:837px;top:342px;width:45px;height:20px;background:#fff;border:1px solid;border-color:#a0a0a0 #fff #fff #a0a0a0;"></div>
<div class="r" style="left:838px;top:343px;width:43px;height:18px;border:1px solid;border-color:#696969 #e8e8e8 #e8e8e8 #696969;"></div>
<div class="t" style="left:837px;top:348.61px;font-size:10.5px;line-height:10.5px;color:#200;width:42px;text-align:right;">1</div>
<div class="t" style="left:890px;top:348.27px;font-size:11.5px;line-height:11.5px;color:#003300;font-weight:bold;letter-spacing:0.5px;">szt.</div>
<div class="r" style="left:915px;top:340px;width:61px;height:26px;background:#fefee2;border:1px solid;border-color:#fff #9a9a9a #9a9a9a #fff;box-shadow:1px 1px 0 #5a5a5a;"></div>
<div class="t" style="left:915px;top:348.29px;font-size:11px;line-height:11px;color:#000;font-weight:bold;width:61px;text-align:center;letter-spacing:-0.1px;text-indent:-1px;">Edytuj</div>
<div class="t" style="left:221px;top:381.13px;font-size:13.2px;line-height:13.2px;color:#003300;font-weight:bold;letter-spacing:-0.3px;">T 3:</div>
<div class="r" style="left:250px;top:376px;width:153px;height:20px;background:#fff;border:1px solid;border-color:#a0a0a0 #fff #fff #a0a0a0;"></div>
<div class="r" style="left:251px;top:377px;width:151px;height:18px;border:1px solid;border-color:#696969 #e8e8e8 #e8e8e8 #696969;"></div>
<div class="r" style="left:387px;top:378px;width:14px;height:16px;background:#ececec;border:1px solid;border-color:#fff #808080 #808080 #fff;"></div>
<svg class="r" style="left:390px;top:384px;" width="8" height="5" viewBox="0 0 8 5"><path d="M0 0.5 L7 0.5 L3.5 4 Z" fill="#000"/></svg>
<div class="t" style="left:259px;top:381.87px;font-size:10.2px;line-height:10.2px;color:#000;letter-spacing:0px;">Opakowanie prezentowe</div>
<div class="r" style="left:422px;top:375px;width:106px;height:20px;background:#fff;border:1px solid;border-color:#a0a0a0 #fff #fff #a0a0a0;"></div>
<div class="r" style="left:423px;top:376px;width:104px;height:18px;border:1px solid;border-color:#696969 #e8e8e8 #e8e8e8 #696969;"></div>
<div class="r" style="left:512px;top:377px;width:14px;height:16px;background:#ececec;border:1px solid;border-color:#fff #808080 #808080 #fff;"></div>
<svg class="r" style="left:515px;top:383px;" width="8" height="5" viewBox="0 0 8 5"><path d="M0 0.5 L7 0.5 L3.5 4 Z" fill="#000"/></svg>
<div class="t" style="left:431px;top:380.87px;font-size:10.2px;line-height:10.2px;color:#000;letter-spacing:0px;">WYSYLKA</div>
<div class="r" style="left:617px;top:376px;width:211px;height:17px;background:#fff;"></div>
<div class="t" style="left:619px;top:379.35px;font-size:11.4px;line-height:11.4px;color:#000;font-weight:bold;">Przesyłka kurierska (Opłata&nbsp; za</div>
<div class="r" style="left:837px;top:375px;width:45px;height:20px;background:#fff;border:1px solid;border-color:#a0a0a0 #fff #fff #a0a0a0;"></div>
<div class="r" style="left:838px;top:376px;width:43px;height:18px;border:1px solid;border-color:#696969 #e8e8e8 #e8e8e8 #696969;"></div>
<div class="t" style="left:837px;top:381.61px;font-size:10.5px;line-height:10.5px;color:#200;width:42px;text-align:right;">1</div>
<div class="t" style="left:890px;top:382.47px;font-size:11.5px;line-height:11.5px;color:#003300;font-weight:bold;letter-spacing:0.5px;">szt.</div>
<div class="r" style="left:915px;top:373px;width:61px;height:26px;background:#fefee2;border:1px solid;border-color:#fff #9a9a9a #9a9a9a #fff;box-shadow:1px 1px 0 #5a5a5a;"></div>
<div class="t" style="left:915px;top:381.29px;font-size:11px;line-height:11px;color:#000;font-weight:bold;width:61px;text-align:center;letter-spacing:-0.1px;text-indent:-1px;">Edytuj</div>
<div class="t" style="left:43px;top:418.02px;font-size:11.2px;line-height:11.2px;color:#000;font-weight:bold;">Kontrahenci z cechą:</div>
<div class="r" style="left:208px;top:414px;width:153px;height:19px;background:#fff;border:1px solid;border-color:#a0a0a0 #fff #fff #a0a0a0;"></div>
<div class="r" style="left:209px;top:415px;width:151px;height:17px;border:1px solid;border-color:#696969 #e8e8e8 #e8e8e8 #696969;"></div>
<div class="r" style="left:345px;top:416px;width:14px;height:15px;background:#ececec;border:1px solid;border-color:#fff #808080 #808080 #fff;"></div>
<svg class="r" style="left:348px;top:421px;" width="8" height="5" viewBox="0 0 8 5"><path d="M0 0.5 L7 0.5 L3.5 4 Z" fill="#000"/></svg>
<div class="t" style="left:218px;top:418.87px;font-size:10.2px;line-height:10.2px;color:#000;letter-spacing:0px;">Krajowy</div>
<div class="r" style="left:380px;top:411px;width:60px;height:26px;background:#fefee2;border:1px solid;border-color:#fff #9a9a9a #9a9a9a #fff;box-shadow:1px 1px 0 #5a5a5a;"></div>
<div class="t" style="left:380px;top:418.49px;font-size:11px;line-height:11px;color:#000;font-weight:bold;width:60px;text-align:center;letter-spacing:-0.2px;">Edytuj</div>
<div class="t" style="left:571px;top:417.77px;font-size:11.5px;line-height:11.5px;color:#000;font-weight:bold;">Towary</div>
<div class="t" style="left:727px;top:417.68px;font-size:11.6px;line-height:11.6px;color:#000;font-weight:bold;">Wystawione faktury VAT</div>
<div class="r" style="left:916px;top:411px;width:61px;height:26px;background:#fefee2;border:1px solid;border-color:#fff #9a9a9a #9a9a9a #fff;box-shadow:1px 1px 0 #5a5a5a;"></div>
<div class="t" style="left:916px;top:419.19px;font-size:11px;line-height:11px;color:#000;font-weight:bold;width:61px;text-align:center;letter-spacing:-0.1px;text-indent:-1px;">Edytuj</div>
<div class="t" style="left:43px;top:444.27px;font-size:11.5px;line-height:11.5px;color:#000;font-weight:bold;">Lp</div>
<div class="t" style="left:75px;top:444.27px;font-size:11.5px;line-height:11.5px;color:#000;font-weight:bold;">Symbol</div>
<div class="t" style="left:163px;top:444.27px;font-size:11.5px;line-height:11.5px;color:#000;font-weight:bold;">Nazwa</div>
<div class="t" style="left:307px;top:444.27px;font-size:11.5px;line-height:11.5px;color:#000;font-weight:bold;">Adres</div>
<div class="t" style="left:571px;top:444.27px;font-size:11.5px;line-height:11.5px;color:#000;font-weight:bold;">T1</div>
<div class="t" style="left:623px;top:444.27px;font-size:11.5px;line-height:11.5px;color:#000;font-weight:bold;">T2</div>
<div class="t" style="left:675px;top:444.27px;font-size:11.5px;line-height:11.5px;color:#000;font-weight:bold;">T3</div>
<div class="t" style="left:727px;top:444.27px;font-size:11.5px;line-height:11.5px;color:#000;font-weight:bold;">Nr</div>
<div class="t" style="left:843px;top:444.27px;font-size:11.5px;line-height:11.5px;color:#000;font-weight:bold;">Data</div>
<div class="t" style="left:915px;top:444.27px;font-size:11.5px;line-height:11.5px;color:#000;font-weight:bold;">Wartość</div>
<div class="r" style="left:30px;top:460px;width:970px;height:261px;overflow:hidden;">
<div class="t" style="left:0px;top:2.19px;font-size:11px;line-height:11px;color:#000;width:39px;text-align:right;">1</div>
<div class="t" style="left:44px;top:2.19px;font-size:11px;line-height:11px;color:#000;">KOBRA</div>
<div class="t" style="left:133px;top:2.19px;font-size:11px;line-height:11px;color:#000;"><div style="width:142px;overflow:hidden">AD KOBRA</div></div>
<div class="t" style="left:277px;top:2.19px;font-size:11px;line-height:11px;color:#000;">Kraków, Więzienna&nbsp; 85</div>
<div class="t" style="left:0px;top:16.19px;font-size:11px;line-height:11px;color:#000;width:39px;text-align:right;">2</div>
<div class="t" style="left:44px;top:16.19px;font-size:11px;line-height:11px;color:#000;">ADMAR</div>
<div class="t" style="left:133px;top:16.19px;font-size:11px;line-height:11px;color:#000;"><div style="width:142px;overflow:hidden">AD-MAR s.c.</div></div>
<div class="t" style="left:277px;top:16.19px;font-size:11px;line-height:11px;color:#000;">Bierkowice, Romanowskiego 23</div>
<div class="t" style="left:0px;top:30.19px;font-size:11px;line-height:11px;color:#000;width:39px;text-align:right;">3</div>
<div class="t" style="left:44px;top:30.19px;font-size:11px;line-height:11px;color:#000;">ALFA</div>
<div class="t" style="left:133px;top:30.19px;font-size:11px;line-height:11px;color:#000;"><div style="width:142px;overflow:hidden">Alfa - Tech s.c.</div></div>
<div class="t" style="left:277px;top:30.19px;font-size:11px;line-height:11px;color:#000;">Wałbrzych, Męckiego&nbsp; 83</div>
<div class="t" style="left:0px;top:44.19px;font-size:11px;line-height:11px;color:#000;width:39px;text-align:right;">4</div>
<div class="t" style="left:44px;top:44.19px;font-size:11px;line-height:11px;color:#000;">NOVUM</div>
<div class="t" style="left:133px;top:44.19px;font-size:11px;line-height:11px;color:#000;"><div style="width:142px;overflow:hidden">Drogeria NOVUM</div></div>
<div class="t" style="left:277px;top:44.19px;font-size:11px;line-height:11px;color:#000;">Sosnowiec, Kolorowa&nbsp; 98/3</div>
<div class="t" style="left:0px;top:58.19px;font-size:11px;line-height:11px;color:#000;width:39px;text-align:right;">5</div>
<div class="t" style="left:44px;top:58.19px;font-size:11px;line-height:11px;color:#000;">ODEON</div>
<div class="t" style="left:133px;top:58.19px;font-size:11px;line-height:11px;color:#000;"><div style="width:142px;overflow:hidden">Drogeria ODEON</div></div>
<div class="t" style="left:277px;top:58.19px;font-size:11px;line-height:11px;color:#000;">Koszalin, Bałtycka&nbsp; 13/6</div>
<div class="t" style="left:0px;top:72.19px;font-size:11px;line-height:11px;color:#000;width:39px;text-align:right;">6</div>
<div class="t" style="left:44px;top:72.19px;font-size:11px;line-height:11px;color:#000;">KOZICKO</div>
<div class="t" style="left:133px;top:72.19px;font-size:11px;line-height:11px;color:#000;"><div style="width:142px;overflow:hidden">Export - Import</div></div>
<div class="t" style="left:277px;top:72.19px;font-size:11px;line-height:11px;color:#000;">Kozicko, Podjazdowa 45</div>
<div class="t" style="left:0px;top:86.19px;font-size:11px;line-height:11px;color:#000;width:39px;text-align:right;">7</div>
<div class="t" style="left:44px;top:86.19px;font-size:11px;line-height:11px;color:#000;">GAMA</div>
<div class="t" style="left:133px;top:86.19px;font-size:11px;line-height:11px;color:#000;"><div style="width:142px;overflow:hidden">Gama Trans Sp.z o.o.</div></div>
<div class="t" style="left:277px;top:86.19px;font-size:11px;line-height:11px;color:#000;">Wrocław, Piastów Śląskich 185</div>
<div class="t" style="left:0px;top:100.19px;font-size:11px;line-height:11px;color:#000;width:39px;text-align:right;">8</div>
<div class="t" style="left:44px;top:100.19px;font-size:11px;line-height:11px;color:#000;">KOPARSKI</div>
<div class="t" style="left:133px;top:100.19px;font-size:11px;line-height:11px;color:#000;"><div style="width:142px;overflow:hidden">Handel Obwoźny</div></div>
<div class="t" style="left:277px;top:100.19px;font-size:11px;line-height:11px;color:#000;">Polanica Zdrój, Kwiatowa&nbsp; 77</div>
<div class="t" style="left:0px;top:114.19px;font-size:11px;line-height:11px;color:#000;width:39px;text-align:right;">9</div>
<div class="t" style="left:44px;top:114.19px;font-size:11px;line-height:11px;color:#000;">HURT</div>
<div class="t" style="left:133px;top:114.19px;font-size:11px;line-height:11px;color:#000;"><div style="width:142px;overflow:hidden">Hurtownia kosmetyków</div></div>
<div class="t" style="left:277px;top:114.19px;font-size:11px;line-height:11px;color:#000;">Koło, Gospodarna&nbsp; 43</div>
<div class="t" style="left:0px;top:128.19px;font-size:11px;line-height:11px;color:#000;width:39px;text-align:right;">10</div>
<div class="t" style="left:44px;top:128.19px;font-size:11px;line-height:11px;color:#000;">BEATRICE</div>
<div class="t" style="left:133px;top:128.19px;font-size:11px;line-height:11px;color:#000;"><div style="width:142px;overflow:hidden">Hurtownia kosmetyków BEAT</div></div>
<div class="t" style="left:277px;top:128.19px;font-size:11px;line-height:11px;color:#000;">Warszawa, Wielka&nbsp; 42</div>
<div class="t" style="left:0px;top:142.19px;font-size:11px;line-height:11px;color:#000;width:39px;text-align:right;">11</div>
<div class="t" style="left:44px;top:142.19px;font-size:11px;line-height:11px;color:#000;">OLEK</div>
<div class="t" style="left:133px;top:142.19px;font-size:11px;line-height:11px;color:#000;"><div style="width:142px;overflow:hidden">Hurtownia OLEK</div></div>
<div class="t" style="left:277px;top:142.19px;font-size:11px;line-height:11px;color:#000;">Warszawa, Baczyńskiego&nbsp; 24/22a</div>
<div class="t" style="left:0px;top:156.19px;font-size:11px;line-height:11px;color:#000;width:39px;text-align:right;">12</div>
<div class="t" style="left:44px;top:156.19px;font-size:11px;line-height:11px;color:#000;">INSERT</div>
<div class="t" style="left:133px;top:156.19px;font-size:11px;line-height:11px;color:#000;"><div style="width:142px;overflow:hidden">InsERT Sp. z o.o.</div></div>
<div class="t" style="left:277px;top:156.19px;font-size:11px;line-height:11px;color:#000;">Wrocław, Kobierzycka 3</div>
<div class="t" style="left:0px;top:170.19px;font-size:11px;line-height:11px;color:#000;width:39px;text-align:right;">13</div>
<div class="t" style="left:44px;top:170.19px;font-size:11px;line-height:11px;color:#000;">ARTUR</div>
<div class="t" style="left:133px;top:170.19px;font-size:11px;line-height:11px;color:#000;"><div style="width:142px;overflow:hidden">Kiosk ARTUR</div></div>
<div class="t" style="left:277px;top:170.19px;font-size:11px;line-height:11px;color:#000;">Lublin, Legnicka&nbsp; 57/2</div>
<div class="t" style="left:0px;top:184.19px;font-size:11px;line-height:11px;color:#000;width:39px;text-align:right;">14</div>
<div class="t" style="left:44px;top:184.19px;font-size:11px;line-height:11px;color:#000;">MAGNUM</div>
<div class="t" style="left:133px;top:184.19px;font-size:11px;line-height:11px;color:#000;"><div style="width:142px;overflow:hidden">Magnum s.c.</div></div>
<div class="t" style="left:277px;top:184.19px;font-size:11px;line-height:11px;color:#000;">Warszawa, Lotnicza&nbsp; 35/65</div>
<div class="t" style="left:0px;top:198.19px;font-size:11px;line-height:11px;color:#000;width:39px;text-align:right;">15</div>
<div class="t" style="left:44px;top:198.19px;font-size:11px;line-height:11px;color:#000;">PRUSK</div>
<div class="t" style="left:133px;top:198.19px;font-size:11px;line-height:11px;color:#000;"><div style="width:142px;overflow:hidden">P.R.U.S.K. Sp.z o.o.</div></div>
<div class="t" style="left:277px;top:198.19px;font-size:11px;line-height:11px;color:#000;">Wałcz, Wiktora&nbsp; 74</div>
<div class="t" style="left:0px;top:212.19px;font-size:11px;line-height:11px;color:#000;width:39px;text-align:right;">16</div>
<div class="t" style="left:44px;top:212.19px;font-size:11px;line-height:11px;color:#000;">BOSS</div>
<div class="t" style="left:133px;top:212.19px;font-size:11px;line-height:11px;color:#000;"><div style="width:142px;overflow:hidden">Perfumeria BOSS</div></div>
<div class="t" style="left:277px;top:212.19px;font-size:11px;line-height:11px;color:#000;">Bielsko Biała, Szczęśliwa&nbsp; 137</div>
<div class="t" style="left:0px;top:226.19px;font-size:11px;line-height:11px;color:#000;width:39px;text-align:right;">17</div>
<div class="t" style="left:44px;top:226.19px;font-size:11px;line-height:11px;color:#000;">MIKOŁAJ</div>
<div class="t" style="left:133px;top:226.19px;font-size:11px;line-height:11px;color:#000;"><div style="width:142px;overflow:hidden">Piekarnia MIKOŁAJ</div></div>
<div class="t" style="left:277px;top:226.19px;font-size:11px;line-height:11px;color:#000;">Kalisz, Polna&nbsp; 33</div>
<div class="t" style="left:0px;top:240.19px;font-size:11px;line-height:11px;color:#000;width:39px;text-align:right;">18</div>
<div class="t" style="left:44px;top:240.19px;font-size:11px;line-height:11px;color:#000;">ROGALIK</div>
<div class="t" style="left:133px;top:240.19px;font-size:11px;line-height:11px;color:#000;"><div style="width:142px;overflow:hidden">Piekarnia ROGALIK</div></div>
<div class="t" style="left:277px;top:240.19px;font-size:11px;line-height:11px;color:#000;">Wrocław, Leśna&nbsp; 45</div>
<div class="t" style="left:0px;top:254.19px;font-size:11px;line-height:11px;color:#000;width:39px;text-align:right;">19</div>
<div class="t" style="left:44px;top:254.19px;font-size:11px;line-height:11px;color:#000;">JAS</div>
<div class="t" style="left:133px;top:254.19px;font-size:11px;line-height:11px;color:#000;"><div style="width:142px;overflow:hidden">PPHU Jaś i Małgosia</div></div>
<div class="t" style="left:277px;top:254.19px;font-size:11px;line-height:11px;color:#000;">Świdnica, Koperkowa&nbsp; 98</div>
</div>
<div class="r" style="left:40px;top:460px;width:1px;height:261px;background:#000;"></div>
<div class="r" style="left:568px;top:460px;width:1px;height:261px;background:#000;"></div>
<div class="r" style="left:620px;top:460px;width:1px;height:261px;background:#000;"></div>
<div class="r" style="left:672px;top:460px;width:1px;height:261px;background:#000;"></div>
<div class="r" style="left:724px;top:460px;width:1px;height:261px;background:#000;"></div>
<div class="r" style="left:982px;top:460px;width:1px;height:261px;background:#000;"></div>
<div class="t" style="left:-21px;top:123.18px;font-size:11.6px;line-height:11.6px;color:#3c3c46;width:120px;text-align:center;">Schowek</div>
<div class="t" style="left:125px;top:123.18px;font-size:11.6px;line-height:11.6px;color:#3c3c46;width:120px;text-align:center;">Czcionka</div>
<div class="t" style="left:312px;top:123.18px;font-size:11.6px;line-height:11.6px;color:#3c3c46;width:120px;text-align:center;">Wyrównanie</div>
<div class="t" style="left:467px;top:123.18px;font-size:11.6px;line-height:11.6px;color:#3c3c46;width:120px;text-align:center;">Liczba</div>
<div class="t" style="left:624px;top:123.18px;font-size:11.6px;line-height:11.6px;color:#3c3c46;width:120px;text-align:center;">Style</div>
<div class="t" style="left:739px;top:123.18px;font-size:11.6px;line-height:11.6px;color:#3c3c46;width:120px;text-align:center;">Komórki</div>
<div class="t" style="left:847px;top:123.18px;font-size:11.6px;line-height:11.6px;color:#3c3c46;width:120px;text-align:center;">Edytowanie</div>
<svg class="r" style="left:76px;top:125px;" width="9" height="9" viewBox="0 0 9 9"><path d="M0.5 8 V0.5 H8" fill="none" stroke="#a0a0a0"/><path d="M3 3 L8 8 M5 8 H8 V5" fill="none" stroke="#8a8a8a" stroke-width="1.2"/></svg>
<svg class="r" style="left:287px;top:125px;" width="9" height="9" viewBox="0 0 9 9"><path d="M0.5 8 V0.5 H8" fill="none" stroke="#a0a0a0"/><path d="M3 3 L8 8 M5 8 H8 V5" fill="none" stroke="#8a8a8a" stroke-width="1.2"/></svg>
<svg class="r" style="left:453px;top:125px;" width="9" height="9" viewBox="0 0 9 9"><path d="M0.5 8 V0.5 H8" fill="none" stroke="#a0a0a0"/><path d="M3 3 L8 8 M5 8 H8 V5" fill="none" stroke="#8a8a8a" stroke-width="1.2"/></svg>
<svg class="r" style="left:597px;top:125px;" width="9" height="9" viewBox="0 0 9 9"><path d="M0.5 8 V0.5 H8" fill="none" stroke="#a0a0a0"/><path d="M3 3 L8 8 M5 8 H8 V5" fill="none" stroke="#8a8a8a" stroke-width="1.2"/></svg>
<svg class="r" style="left:19px;top:55px;" width="28" height="33" viewBox="0 0 28 33"><rect x="1.5" y="4.3" width="23" height="24.2" rx="1.5" fill="#c4c4c4" stroke="#9a9a9a"/>
<rect x="3.5" y="6.5" width="19" height="20" fill="#bdbdbd"/>
<path d="M6.5 8.5 V6 H10 Q10 2.5 13 2.5 Q16 2.5 16 6 H19.5 V8.5 Z" fill="#e4e4e4" stroke="#888"/>
<path d="M10.2 13.4 H22 L27 18.4 V31.7 H10.2 Z" fill="#f2f2f2" stroke="#a0a0a0"/><path d="M22 13.4 V18.4 H27" fill="#dcdcdc" stroke="#a0a0a0"/>
<path d="M12.5 17.5 H21 M12.5 19.5 H24 M12.5 21.5 H24 M12.5 23.5 H24 M12.5 25.5 H24 M12.5 27.5 H24 M12.5 29.5 H24" stroke="#c4c4c4" stroke-width="0.8"/></svg>
<div class="t" style="left:18px;top:93.84px;font-size:12px;line-height:12px;color:#747480;">Wklej</div>
<svg class="r" style="left:29px;top:110px;" width="7" height="4" viewBox="0 0 7 4"><path d="M0 0 L6 0 L3 3 Z" fill="#8a8a8a"/></svg>
<svg class="r" style="left:59px;top:57px;" width="12" height="16" viewBox="0 0 12 16"><path d="M3 1 L7 10 M9 1 L5 10" stroke="#6e6e6e" stroke-width="1.6"/><ellipse cx="3.5" cy="12.5" rx="2.4" ry="2.6" fill="#9a9a9a" stroke="#555" stroke-width="1.2"/><ellipse cx="8.5" cy="12.5" rx="2.4" ry="2.6" fill="#9a9a9a" stroke="#555" stroke-width="1.2"/></svg>
<svg class="r" style="left:57px;top:80px;" width="17" height="15" viewBox="0 0 17 15"><path d="M0.5 0.5 H6 L8 2.5 V10.5 H0.5 Z" fill="#f0f0f0" stroke="#7a7a7a"/><path d="M2 3 H6 M2 5 H6 M2 7 H6" stroke="#9a9a9a" stroke-width="0.8"/><path d="M6.5 3.5 H12 L14.5 6 V14.5 H6.5 Z" fill="#f0f0f0" stroke="#6a6a6a"/><path d="M8 7 H13 M8 9 H13 M8 11 H13 M8 13 H13" stroke="#8a8a8a" stroke-width="0.8"/></svg>
<svg class="r" style="left:77px;top:85px;" width="7" height="4" viewBox="0 0 7 4"><path d="M0 0 L6 0 L3 3 Z" fill="#7a7a7a"/></svg>
<svg class="r" style="left:58px;top:101px;" width="16" height="16" viewBox="0 0 16 16"><path d="M9.5 4.5 L12 1.5 L14.5 4 L11.5 6.5 Z" fill="#8a8a8a" stroke="#6a6a6a" stroke-width="0.6"/><path d="M8.5 4 L12 7.5 L6 14.5 L1 10 Z" fill="#d4d4d4" stroke="#7a7a7a"/><path d="M2 11 L6 14" stroke="#9a9a9a"/></svg>
<div class="r" style="left:95px;top:62px;width:112px;height:22px;background:linear-gradient(#d2d2d2,#c8c8c8);border:1px solid #b0b0b0;"></div>
<div class="r" style="left:206px;top:62px;width:44px;height:22px;background:linear-gradient(#d2d2d2,#c8c8c8);border:1px solid #b0b0b0;"></div>
<svg class="r" style="left:197px;top:72px;" width="7" height="4" viewBox="0 0 7 4"><path d="M0 0 L6 0 L3 3 Z" fill="#666"/></svg>
<svg class="r" style="left:240px;top:72px;" width="7" height="4" viewBox="0 0 7 4"><path d="M0 0 L6 0 L3 3 Z" fill="#666"/></svg>
<div class="t" style="left:209px;top:67.84px;font-size:12px;line-height:12px;color:#b4b4b4;">10</div>
<div class="t" style="left:254px;top:67.30px;font-size:15px;line-height:15px;color:#8a8a8a;font-family:'Liberation Serif',serif;font-weight:bold;">A</div>
<svg class="r" style="left:266px;top:66px;" width="6" height="4" viewBox="0 0 6 4"><path d="M0 3 L3 0 L6 3 Z" fill="#777"/></svg>
<div class="t" style="left:278px;top:70.69px;font-size:11px;line-height:11px;color:#8a8a8a;font-family:'Liberation Serif',serif;font-weight:bold;">A</div>
<svg class="r" style="left:287px;top:67px;" width="6" height="4" viewBox="0 0 6 4"><path d="M0 0 L6 0 L3 3 Z" fill="#777"/></svg>
<div class="t" style="left:101px;top:96.42px;font-size:12.5px;line-height:12.5px;color:#555;font-weight:bold;font-family:'Liberation Serif',serif;">B</div>
<div class="t" style="left:125px;top:96.42px;font-size:12.5px;line-height:12.5px;color:#666;font-weight:bold;font-family:'Liberation Serif',serif;"><i>I</i></div>
<div class="t" style="left:147px;top:95.84px;font-size:12px;line-height:12px;color:#555;font-weight:bold;font-family:'Liberation Serif',serif;">U</div>
<div class="r" style="left:147px;top:108px;width:10px;height:1px;background:#7a7a7a;"></div>
<svg class="r" style="left:168px;top:101px;" width="7" height="4" viewBox="0 0 7 4"><path d="M0 0 L6 0 L3 3 Z" fill="#8a8a8a"/></svg>
<svg class="r" style="left:213px;top:101px;" width="7" height="4" viewBox="0 0 7 4"><path d="M0 0 L6 0 L3 3 Z" fill="#8a8a8a"/></svg>
<svg class="r" style="left:255px;top:101px;" width="7" height="4" viewBox="0 0 7 4"><path d="M0 0 L6 0 L3 3 Z" fill="#8a8a8a"/></svg>
<svg class="r" style="left:288px;top:101px;" width="7" height="4" viewBox="0 0 7 4"><path d="M0 0 L6 0 L3 3 Z" fill="#8a8a8a"/></svg>
<div class="r" style="left:179px;top:92px;width:1px;height:21px;background:#8a8a8a;box-shadow:1px 0 0 #eee;"></div>
<div class="r" style="left:224px;top:92px;width:1px;height:21px;background:#8a8a8a;box-shadow:1px 0 0 #eee;"></div>
<svg class="r" style="left:190px;top:95px;" width="13" height="14" viewBox="0 0 13 14"><path d="M0.5 0.5 H12.5 V12.5 H0.5 Z M6.5 0.5 V12.5 M0.5 6.5 H12.5" fill="none" stroke="#9a9a9a" stroke-dasharray="1 1"/><rect x="0" y="12" width="13" height="1.6" fill="#6a6a6a"/></svg>
<svg class="r" style="left:231px;top:94px;" width="17" height="16" viewBox="0 0 17 16"><path d="M3 6 L8 1 L14 7 L9 12 Z" fill="#f4f4f4" stroke="#7a7a7a" stroke-width="1.2"/><path d="M8 1 V5" stroke="#7a7a7a"/><path d="M14 7 Q16 9 15 11" stroke="#7a7a7a" fill="none" stroke-width="1.3"/><rect x="1" y="13" width="15" height="3" fill="#e6e6e6"/></svg>
<div class="t" style="left:268px;top:95.30px;font-size:15px;line-height:15px;color:#8a8a8a;font-family:'Liberation Serif',serif;font-weight:bold;">A</div>
<svg class="r" style="left:309px;top:65px;" width="16" height="11" viewBox="0 0 16 11"><rect x="0" y="0" width="14" height="1" fill="#3c3c3c"/><rect x="0" y="1" width="14" height="1" fill="#3c3c3c" opacity="0.25"/><rect x="0" y="3" width="14" height="1" fill="#3c3c3c"/><rect x="0" y="4" width="14" height="1" fill="#3c3c3c" opacity="0.25"/><rect x="0" y="6" width="12" height="1" fill="#3c3c3c"/><rect x="0" y="7" width="12" height="1" fill="#3c3c3c" opacity="0.25"/></svg>
<svg class="r" style="left:332px;top:70px;" width="16" height="11" viewBox="0 0 16 11"><rect x="0" y="0" width="14" height="1" fill="#3c3c3c"/><rect x="0" y="1" width="14" height="1" fill="#3c3c3c" opacity="0.25"/><rect x="0" y="3" width="14" height="1" fill="#3c3c3c"/><rect x="0" y="4" width="14" height="1" fill="#3c3c3c" opacity="0.25"/><rect x="0" y="6" width="14" height="1" fill="#3c3c3c"/><rect x="0" y="7" width="14" height="1" fill="#3c3c3c" opacity="0.25"/></svg>
<svg class="r" style="left:355px;top:73px;" width="16" height="11" viewBox="0 0 16 11"><rect x="0" y="0" width="14" height="1" fill="#3c3c3c"/><rect x="0" y="1" width="14" height="1" fill="#3c3c3c" opacity="0.25"/><rect x="0" y="3" width="14" height="1" fill="#3c3c3c"/><rect x="0" y="4" width="14" height="1" fill="#3c3c3c" opacity="0.25"/><rect x="0" y="6" width="14" height="1" fill="#3c3c3c"/><rect x="0" y="7" width="14" height="1" fill="#3c3c3c" opacity="0.25"/></svg>
<svg class="r" style="left:309px;top:95px;" width="16" height="17" viewBox="0 0 16 17"><rect x="0" y="0" width="14" height="1" fill="#3c3c3c"/><rect x="0" y="1" width="14" height="1" fill="#3c3c3c" opacity="0.25"/><rect x="0" y="3" width="9" height="1" fill="#3c3c3c"/><rect x="0" y="4" width="9" height="1" fill="#3c3c3c" opacity="0.25"/><rect x="0" y="6" width="14" height="1" fill="#3c3c3c"/><rect x="0" y="7" width="14" height="1" fill="#3c3c3c" opacity="0.25"/><rect x="0" y="9" width="9" height="1" fill="#3c3c3c"/><rect x="0" y="10" width="9" height="1" fill="#3c3c3c" opacity="0.25"/><rect x="0" y="12" width="14" height="1" fill="#3c3c3c"/><rect x="0" y="13" width="14" height="1" fill="#3c3c3c" opacity="0.25"/></svg>
<svg class="r" style="left:332px;top:95px;" width="16" height="17" viewBox="0 0 16 17"><rect x="0" y="0" width="14" height="1" fill="#3c3c3c"/><rect x="0" y="1" width="14" height="1" fill="#3c3c3c" opacity="0.25"/><rect x="2" y="3" width="10" height="1" fill="#3c3c3c"/><rect x="2" y="4" width="10" height="1" fill="#3c3c3c" opacity="0.25"/><rect x="0" y="6" width="14" height="1" fill="#3c3c3c"/><rect x="0" y="7" width="14" height="1" fill="#3c3c3c" opacity="0.25"/><rect x="2" y="9" width="10" height="1" fill="#3c3c3c"/><rect x="2" y="10" width="10" height="1" fill="#3c3c3c" opacity="0.25"/><rect x="0" y="12" width="14" height="1" fill="#3c3c3c"/><rect x="0" y="13" width="14" height="1" fill="#3c3c3c" opacity="0.25"/></svg>
<svg class="r" style="left:355px;top:95px;" width="16" height="17" viewBox="0 0 16 17"><rect x="0" y="0" width="14" height="1" fill="#3c3c3c"/><rect x="0" y="1" width="14" height="1" fill="#3c3c3c" opacity="0.25"/><rect x="4" y="3" width="10" height="1" fill="#3c3c3c"/><rect x="4" y="4" width="10" height="1" fill="#3c3c3c" opacity="0.25"/><rect x="0" y="6" width="14" height="1" fill="#3c3c3c"/><rect x="0" y="7" width="14" height="1" fill="#3c3c3c" opacity="0.25"/><rect x="4" y="9" width="10" height="1" fill="#3c3c3c"/><rect x="4" y="10" width="10" height="1" fill="#3c3c3c" opacity="0.25"/><rect x="0" y="12" width="14" height="1" fill="#3c3c3c"/><rect x="0" y="13" width="14" height="1" fill="#3c3c3c" opacity="0.25"/></svg>
<svg class="r" style="left:381px;top:65px;" width="22" height="14" viewBox="0 0 22 14"><text x="0" y="11" font-family="Liberation Serif" font-weight="bold" font-size="11" fill="#5a5a5a" transform="rotate(-40 6 8)">ab</text><path d="M5 13 L14 5" stroke="#7a7a7a"/><path d="M12 4 L15 4 L15 7" fill="none" stroke="#7a7a7a"/><path d="M17 5 L22 5 L19.5 8 Z" fill="#8a8a8a"/></svg>
<svg class="r" style="left:380px;top:93px;" width="17" height="17" viewBox="0 0 17 17"><g fill="#3a3a3a"><rect x="8" y="2" width="9" height="1"/><rect x="8" y="5" width="9" height="2"/><rect x="8" y="9" width="9" height="2"/><rect x="8" y="13" width="9" height="1"/></g><path d="M6.5 0 V17" stroke="#3a3a3a" stroke-dasharray="1 1"/><path d="M5 8 H0.5 M3 6 L0.5 8 L3 10" fill="none" stroke="#8a8a8a"/></svg>
<svg class="r" style="left:403px;top:93px;" width="17" height="17" viewBox="0 0 17 17"><g fill="#3a3a3a"><rect x="8" y="2" width="9" height="1"/><rect x="8" y="5" width="9" height="2"/><rect x="8" y="9" width="9" height="2"/><rect x="8" y="13" width="9" height="1"/></g><path d="M6.5 0 V17" stroke="#3a3a3a" stroke-dasharray="1 1"/><path d="M0 8 H5 M2.5 6 L5 8 L2.5 10" fill="none" stroke="#8a8a8a"/></svg>
<div class="r" style="left:425px;top:59px;width:1px;height:55px;background:#8a8a8a;box-shadow:1px 0 0 #eee;"></div>
<svg class="r" style="left:433px;top:64px;" width="17" height="17" viewBox="0 0 17 17"><rect x="1" y="1" width="12" height="4" fill="#eee" stroke="#8a8a8a"/><rect x="1" y="9" width="12" height="6" fill="#eee" stroke="#8a8a8a"/><path d="M3 11 H11 M3 13 H9" stroke="#8a8a8a"/><path d="M13 3 H16 V10 L13 11" fill="none" stroke="#8a8a8a"/></svg>
<svg class="r" style="left:433px;top:93px;" width="17" height="17" viewBox="0 0 17 17"><rect x="0.5" y="0.5" width="15" height="15" fill="#e6e6e6" stroke="#9a9a9a"/><rect x="0.5" y="4" width="15" height="8" fill="#f4f4f4" stroke="#9a9a9a"/><text x="8" y="11" font-family="Liberation Serif" font-weight="bold" font-size="10" fill="#6a6a6a" text-anchor="middle">a</text><path d="M1 8 H4 M12 8 H15" stroke="#6a6a6a"/></svg>
<svg class="r" style="left:455px;top:100px;" width="7" height="4" viewBox="0 0 7 4"><path d="M0 0 L6 0 L3 3 Z" fill="#8a8a8a"/></svg>
<div class="r" style="left:471px;top:62px;width:135px;height:22px;background:linear-gradient(#d2d2d2,#c8c8c8);border:1px solid #b0b0b0;"></div>
<div class="t" style="left:475px;top:67.84px;font-size:12px;line-height:12px;color:#bcbcbc;">Data</div>
<svg class="r" style="left:595px;top:72px;" width="7" height="4" viewBox="0 0 7 4"><path d="M0 0 L6 0 L3 3 Z" fill="#555"/></svg>
<svg class="r" style="left:475px;top:94px;" width="17" height="16" viewBox="0 0 17 16"><rect x="0.5" y="0.5" width="15" height="8" fill="#a8a8a8" stroke="#6a6a6a"/><ellipse cx="8" cy="4.5" rx="4" ry="3" fill="#d8d8d8" stroke="#6a6a6a" stroke-width="0.8"/><path d="M3 10 H9 M4 12 H11 M5 14 H11" stroke="#7a7a7a" stroke-width="1.2"/></svg>
<svg class="r" style="left:497px;top:100px;" width="7" height="4" viewBox="0 0 7 4"><path d="M0 0 L6 0 L3 3 Z" fill="#8a8a8a"/></svg>
<div class="t" style="left:511px;top:96.42px;font-size:12.5px;line-height:12.5px;color:#4a4a4a;">%</div>
<div class="t" style="left:533px;top:97.27px;font-size:11.5px;line-height:11.5px;color:#4a4a4a;letter-spacing:-1px;">000</div>
<div class="r" style="left:555px;top:92px;width:1px;height:21px;background:#8a8a8a;box-shadow:1px 0 0 #eee;"></div>
<svg class="r" style="left:563px;top:94px;" width="18" height="17" viewBox="0 0 18 17"><text x="7.5" y="7" font-family="Liberation Sans" font-weight="bold" font-size="8.5" fill="#4a4a4a">,0</text><text x="3.5" y="15.5" font-family="Liberation Sans" font-weight="bold" font-size="8.5" fill="#4a4a4a">,00</text><path d="M1.5 4 H7 M3.5 2 L1.5 4 L3.5 6" fill="none" stroke="#5a5a5a" stroke-width="1.1"/></svg>
<svg class="r" style="left:585px;top:94px;" width="18" height="17" viewBox="0 0 18 17"><text x="4.5" y="7" font-family="Liberation Sans" font-weight="bold" font-size="8.5" fill="#4a4a4a">,00</text><text x="8.5" y="15.5" font-family="Liberation Sans" font-weight="bold" font-size="8.5" fill="#4a4a4a">,0</text><path d="M1 12 H7 M5 10 L7 12 L5 14" fill="none" stroke="#5a5a5a" stroke-width="1.1"/></svg>
<svg class="r" style="left:617px;top:57px;" width="17" height="16" viewBox="0 0 17 16"><rect x="0.5" y="0.5" width="13" height="12" fill="#f0f0f0" stroke="#8a8a8a"/><path d="M0.5 4.5 H13.5 M0.5 8.5 H13.5 M5 0.5 V12.5 M9 0.5 V12.5" stroke="#9a9a9a"/><rect x="7" y="7" width="9" height="8" fill="#eaeaea" stroke="#6a6a6a"/><text x="8" y="14" font-size="6" font-family="Liberation Sans" fill="#333">$$</text></svg>
<svg class="r" style="left:617px;top:79px;" width="17" height="16" viewBox="0 0 17 16"><rect x="0.5" y="0.5" width="13" height="12" fill="#f0f0f0" stroke="#8a8a8a"/><path d="M0.5 4.5 H13.5 M0.5 8.5 H13.5 M5 0.5 V12.5 M9 0.5 V12.5" stroke="#9a9a9a"/><path d="M7 15 L15 6" stroke="#7a7a7a" stroke-width="2"/></svg>
<svg class="r" style="left:617px;top:100px;" width="17" height="16" viewBox="0 0 17 16"><rect x="0.5" y="0.5" width="13" height="12" fill="#f0f0f0" stroke="#8a8a8a"/><path d="M0.5 4.5 H13.5 M0.5 8.5 H13.5 M5 0.5 V12.5 M9 0.5 V12.5" stroke="#9a9a9a"/><path d="M7 15 L15 6" stroke="#7a7a7a" stroke-width="2"/></svg>
<div class="t" style="left:636px;top:59.01px;font-size:11.8px;line-height:11.8px;color:#7c7c7c;">Formatow. warunk.</div>
<div class="t" style="left:636px;top:81.01px;font-size:11.8px;line-height:11.8px;color:#7c7c7c;">Formatuj jako tabelę</div>
<div class="t" style="left:636px;top:102.51px;font-size:11.8px;line-height:11.8px;color:#7c7c7c;">Style komórki</div>
<svg class="r" style="left:741px;top:64px;" width="7" height="4" viewBox="0 0 7 4"><path d="M0 0 L6 0 L3 3 Z" fill="#8a8a8a"/></svg>
<svg class="r" style="left:747px;top:86px;" width="7" height="4" viewBox="0 0 7 4"><path d="M0 0 L6 0 L3 3 Z" fill="#8a8a8a"/></svg>
<svg class="r" style="left:710px;top:107px;" width="7" height="4" viewBox="0 0 7 4"><path d="M0 0 L6 0 L3 3 Z" fill="#8a8a8a"/></svg>
<svg class="r" style="left:767px;top:58px;" width="16" height="14" viewBox="0 0 16 14"><rect x="0.5" y="0.5" width="5" height="3" fill="#eee" stroke="#8a8a8a"/><rect x="0.5" y="5" width="5" height="3.5" fill="#eee" stroke="#8a8a8a"/><rect x="0.5" y="10" width="5" height="3.5" fill="#eee" stroke="#8a8a8a"/><rect x="10" y="5" width="5" height="3.5" fill="#eee" stroke="#8a8a8a"/><path d="M6 6.7 H10 M7.5 5 L6 6.7 L7.5 8.4" fill="none" stroke="#555"/></svg>
<svg class="r" style="left:767px;top:79px;" width="16" height="14" viewBox="0 0 16 14"><rect x="0.5" y="0.5" width="5" height="3" fill="#eee" stroke="#8a8a8a"/><rect x="0.5" y="5" width="5" height="3.5" fill="#eee" stroke="#8a8a8a"/><rect x="0.5" y="10" width="5" height="3.5" fill="#eee" stroke="#8a8a8a"/><path d="M7 4 L14 10 M14 4 L7 10" stroke="#8a8a8a" stroke-width="1.3"/></svg>
<svg class="r" style="left:766px;top:100px;" width="17" height="16" viewBox="0 0 17 16"><rect x="0.5" y="2.5" width="15" height="12" fill="#f4f8fc" stroke="#5a7aaa"/><path d="M0.5 6.5 H15.5 M0.5 10.5 H15.5 M5.5 2.5 V14.5 M10.5 2.5 V14.5" stroke="#8aaad8"/><rect x="6" y="7" width="4" height="3" fill="#5a8ae0"/><path d="M2 0.5 V3 M5 0.5 V3 M8 0.5 V3 M11 0.5 V3 M14 0.5 V3" stroke="#3a3a3a" stroke-width="0.8"/></svg>
<div class="t" style="left:786px;top:59.01px;font-size:11.8px;line-height:11.8px;color:#7c7c7c;">Wstaw</div>
<div class="t" style="left:786px;top:81.01px;font-size:11.8px;line-height:11.8px;color:#7c7c7c;">Usuń</div>
<div class="t" style="left:786px;top:102.51px;font-size:11.8px;line-height:11.8px;color:#111;">Format</div>
<svg class="r" style="left:827px;top:64px;" width="7" height="4" viewBox="0 0 7 4"><path d="M0 0 L6 0 L3 3 Z" fill="#8a8a8a"/></svg>
<svg class="r" style="left:819px;top:86px;" width="7" height="4" viewBox="0 0 7 4"><path d="M0 0 L6 0 L3 3 Z" fill="#8a8a8a"/></svg>
<svg class="r" style="left:827px;top:107px;" width="7" height="4" viewBox="0 0 7 4"><path d="M0 0 L6 0 L3 3 Z" fill="#555"/></svg>
<div class="t" style="left:848px;top:58.15px;font-size:14px;line-height:14px;color:#2a2a2a;font-weight:bold;font-family:'Liberation Serif',serif;">Σ</div>
<svg class="r" style="left:866px;top:64px;" width="7" height="4" viewBox="0 0 7 4"><path d="M0 0 L6 0 L3 3 Z" fill="#8a8a8a"/></svg>
<svg class="r" style="left:848px;top:79px;" width="13" height="16" viewBox="0 0 13 16"><rect x="0.5" y="0.5" width="12" height="15" fill="#e0e0e0" stroke="#8a8a8a"/><rect x="0.5" y="0.5" width="12" height="3" fill="#c8c8c8" stroke="#8a8a8a"/><path d="M4.5 5 H8.5 V9 H10.5 L6.5 13 L2.5 9 H4.5 Z" fill="#9a9a9a" stroke="#6a6a6a" stroke-width="0.7"/></svg>
<svg class="r" style="left:866px;top:86px;" width="7" height="4" viewBox="0 0 7 4"><path d="M0 0 L6 0 L3 3 Z" fill="#8a8a8a"/></svg>
<svg class="r" style="left:847px;top:102px;" width="15" height="13" viewBox="0 0 15 13"><path d="M1 8 L8 1 L13 5 L6 12 Z" fill="#ececec" stroke="#8a8a8a"/><path d="M1 12.5 H12" stroke="#6a6a6a"/></svg>
<svg class="r" style="left:866px;top:108px;" width="7" height="4" viewBox="0 0 7 4"><path d="M0 0 L6 0 L3 3 Z" fill="#8a8a8a"/></svg>
<svg class="r" style="left:880px;top:57px;" width="32" height="30" viewBox="0 0 32 30"><text x="1" y="13" font-family="Liberation Serif" font-weight="bold" font-size="15" fill="#8c8c8c">A</text><text x="2" y="28" font-family="Liberation Serif" font-weight="bold" font-size="15" fill="#8c8c8c">Z</text><path d="M11 4 H32 L24 13 V26 L19 26 V13 Z" fill="#b4b4b4" stroke="#9a9a9a"/></svg>
<div class="t" style="left:878px;top:95.18px;font-size:11.6px;line-height:11.6px;color:#7c7c7c;">Sortuj i</div>
<div class="t" style="left:878px;top:107.18px;font-size:11.6px;line-height:11.6px;color:#7c7c7c;">filtruj</div>
<svg class="r" style="left:905px;top:113px;" width="7" height="4" viewBox="0 0 7 4"><path d="M0 0 L6 0 L3 3 Z" fill="#8a8a8a"/></svg>
<svg class="r" style="left:928px;top:59px;" width="29" height="27" viewBox="0 0 29 27"><defs><linearGradient id="bg" x1="0" y1="0" x2="1" y2="0"><stop offset="0" stop-color="#7a90c0"/><stop offset="0.4" stop-color="#c8d6f0"/><stop offset="1" stop-color="#4a609a"/></linearGradient></defs>
<rect x="8" y="1" width="5" height="5" rx="1" fill="url(#bg)"/><rect x="16" y="1" width="5" height="5" rx="1" fill="url(#bg)"/>
<rect x="5" y="5" width="9" height="9" rx="2" fill="url(#bg)"/><rect x="15" y="5" width="9" height="9" rx="2" fill="url(#bg)"/>
<rect x="1" y="12" width="12" height="14" rx="3" fill="url(#bg)" stroke="#3a4a7a" stroke-width="0.6"/><rect x="16" y="12" width="12" height="14" rx="3" fill="url(#bg)" stroke="#3a4a7a" stroke-width="0.6"/><rect x="12" y="10" width="5" height="6" fill="#5a70a8"/></svg>
<div class="t" style="left:922px;top:95.35px;font-size:11.4px;line-height:11.4px;color:#111;">Znajdź i</div>
<div class="t" style="left:920px;top:107.35px;font-size:11.4px;line-height:11.4px;color:#111;letter-spacing:-0.2px;">zaznacz</div>
<svg class="r" style="left:962px;top:113px;" width="7" height="4" viewBox="0 0 7 4"><path d="M0 0 L6 0 L3 3 Z" fill="#555"/></svg>
</body></html>
